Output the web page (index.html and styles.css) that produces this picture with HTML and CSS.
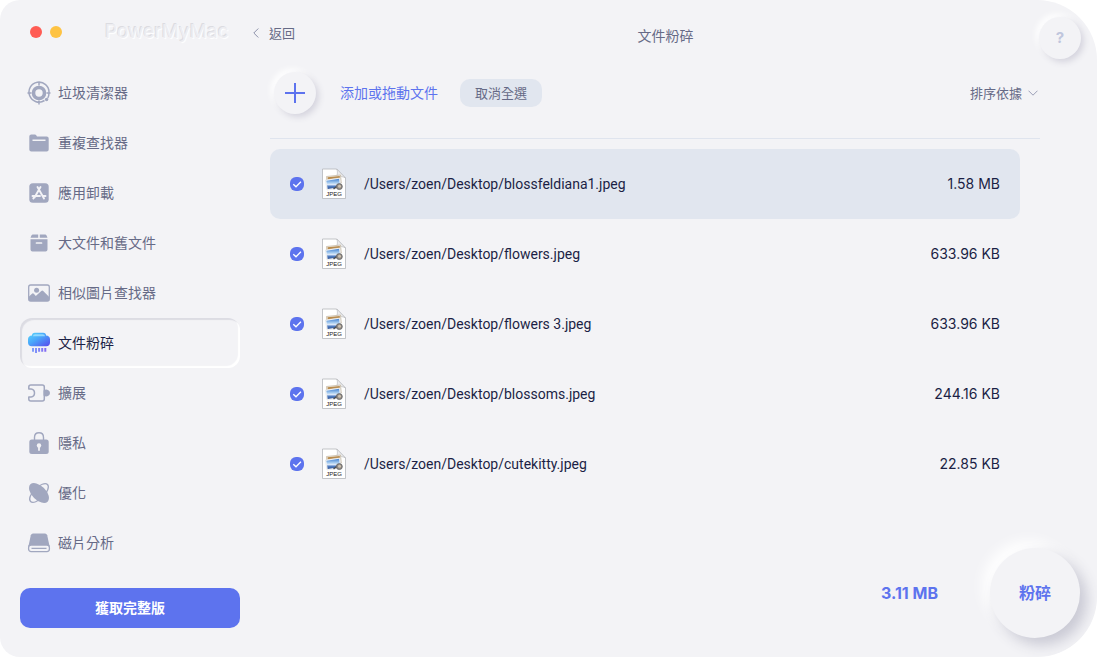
FILE: index.html
```html
<!DOCTYPE html>
<html lang="zh-Hant">
<head>
<meta charset="utf-8">
<meta name="viewport" content="width=device-width, initial-scale=1">
<title>PowerMyMac</title>
<link rel="stylesheet" href="styles.css">
</head>
<body>
<svg class="defs" aria-hidden="true">
  <defs>
    <linearGradient id="shred" x1="0" y1="0" x2="1" y2="1"><stop offset="0" stop-color="#57d8fb"/><stop offset=".45" stop-color="#4aa5fa"/><stop offset="1" stop-color="#5a48ec"/></linearGradient>
    <linearGradient id="strips" x1="0" y1="0" x2="1" y2="0"><stop offset="0" stop-color="#7fa0fb"/><stop offset="1" stop-color="#8468f2"/></linearGradient>
    <linearGradient id="photo" x1="0" y1="0" x2="0" y2="1"><stop offset="0" stop-color="#3f7fd0"/><stop offset=".4" stop-color="#a9cdf0"/><stop offset=".6" stop-color="#e6eefa"/><stop offset=".7" stop-color="#5a86c8"/><stop offset="1" stop-color="#2a4f93"/></linearGradient>
    <symbol id="jpeg" viewBox="0 0 26 32">
      <path d="M1.500 1h14.200L24.500 10v20.500h-23z" fill="#fff" stroke="#b4b6bb" stroke-width=".8"/>
      <path d="M15.700 1c1.200 2.500.8 5.500-.2 8 3-1 6.500-.6 9 1z" fill="#ececee" stroke="#b5b7bb" stroke-width=".6"/>
      <path d="M5.500 8.500l14-1.500.8 8-14.200 1.500z" fill="#f3efe8" stroke="#b9a78e" stroke-width=".6"/>
      <path d="M6.500 9.300l12.200-1.300.3 1.900-12.300 1.300z" fill="#b88b4d"/>
      <path d="M4.500 12l14.300-2.200 1.300 9.800L6 22z" fill="#fff" stroke="#ccc" stroke-width=".4"/>
      <path d="M5.300 12.700l12.800-2 1.100 8.300L6.700 21z" fill="url(#photo)"/>
      <path d="M12.500 20.800l4-2.800" stroke="#4a4d54" stroke-width="1.500"/>
      <circle cx="18.300" cy="18.600" r="3" fill="#918a82" stroke="#66666a" stroke-width=".8"/><circle cx="18.500" cy="18.200" r="1.500" fill="#cfc3b0"/>
      <text x="13" y="28" text-anchor="middle" class="jpeg-label">JPEG</text>
    </symbol>
  </defs>
</svg>
<div class="window">
  <aside class="sidebar">
    <header class="brand">
      <div class="lights"><button class="light light-close" aria-label="關閉"></button><button class="light light-min" aria-label="最小化"></button></div>
      <span class="brand-name">PowerMyMac</span>
    </header>
    <nav class="nav">
      <a class="nav-item" href="#"><svg class="icon" viewBox="0 0 24 24"><circle cx="12" cy="12" r="5.500" fill="none" stroke="currentColor" stroke-width="3.600"/><path d="M17.500 19.500A10 10 0 1 1 22 11.500M22 12q0 3-1.300 5M12 .5v4M.5 12h4M19.500 12h4M12 19.500v4" fill="none" stroke="currentColor" stroke-width="1.500"/><circle cx="19.600" cy="18.500" r="1.700" fill="currentColor"/></svg>垃圾清潔器</a>
      <a class="nav-item" href="#"><svg class="icon" viewBox="0 0 24 24"><path d="M2.300 5.500q0-2 2-2h3.500q1 0 1.600 1L10 5.500h9.700q2 0 2 2v11q0 2-2 2H4.300q-2 0-2-2z" fill="currentColor"/><path d="M5.500 9.300h13" stroke="#f3f3f6" stroke-width="1.500"/></svg>重複查找器</a>
      <a class="nav-item" href="#"><svg class="icon" viewBox="0 0 24 24"><rect x="2.300" y="2.300" width="19.400" height="19.400" rx="3.500" fill="currentColor"/><path d="M10.500 6l6.500 11.500M13.500 6L7.500 16.500M5.500 15h7.500M15.800 15h2.700M6.300 17.500l.7-1.200" stroke="#f3f3f6" stroke-width="1.900" stroke-linecap="round"/></svg>應用卸載</a>
      <a class="nav-item" href="#"><svg class="icon" viewBox="0 0 24 24"><path d="M6 3.500h5.200v3.300H3.500l.8-2q.5-1.300 1.700-1.300zM12.800 3.500H18q1.200 0 1.700 1.300l.8 2h-7.700zM3.500 8.200h17v10.300q0 2-2 2h-13q-2 0-2-2z" fill="currentColor"/><path d="M9.500 12h5" stroke="#f3f3f6" stroke-width="1.700" stroke-linecap="round"/></svg>大文件和舊文件</a>
      <a class="nav-item" href="#"><svg class="icon" viewBox="0 0 24 24"><rect x="1.700" y="4" width="20.600" height="16" rx="2" fill="none" stroke="currentColor" stroke-width="1.300"/><circle cx="9.600" cy="9.300" r="2.500" fill="currentColor"/><path d="M2 15.500l3.300-3q.8-.5 1.500.2l2 2.300 5.500-5q1-.8 1.900 0l5.800 5.700V20H2z" fill="currentColor"/></svg>相似圖片查找器</a>
      <a class="nav-item nav-active" href="#" aria-current="page"><svg class="icon" viewBox="0 0 24 24"><path d="M5 4.500q0-2.800 2.800-2.800h8.400q2.800 0 2.800 2.800 4 .3 4 4v3q0 3.700-3.800 3.700H4.800Q1 15.200 1 11.500v-3q0-3.700 4-4z" fill="url(#shred)"/><path d="M6 5.200q0-2 2.200-2h7.600q2.200 0 2.200 2z" fill="#aeeaff" opacity=".7"/><path d="M5 17h2v3.700H5zM8 17h2v5H8zM11.100 17h2v3.700h-2zM14.200 17h2v3.700h-2zM17.300 17h2v3.700h-2z" fill="url(#strips)"/></svg>文件粉碎</a>
      <a class="nav-item" href="#"><svg class="icon" viewBox="0 0 24 24"><path d="M1.800 8V6q0-2 2-2h11.500q2 0 2 2v12q0 2-2 2H3.800q-2 0-2-2v-2H4q3.500-.4 3.500-4T4 8z" fill="none" stroke="currentColor" stroke-width="1.500" stroke-linejoin="round"/><path d="M16.500 9.500q2.500-1.700 4.500-.5t2 3-2 3-4.500-.5z" fill="currentColor"/></svg>擴展</a>
      <a class="nav-item" href="#"><svg class="icon" viewBox="0 0 24 24"><path d="M7.500 9V6.500q0-4.700 4.500-4.700t4.500 4.700V9" fill="none" stroke="currentColor" stroke-width="1.400"/><rect x="2.300" y="8.500" width="19.400" height="14.500" rx="2.500" fill="currentColor"/><circle cx="12" cy="14.500" r="2.200" fill="#f3f3f6"/><path d="M12 14.500v4.500" stroke="#f3f3f6" stroke-width="1.800" stroke-linecap="round"/></svg>隱私</a>
      <a class="nav-item" href="#"><svg class="icon" viewBox="0 0 24 24"><ellipse cx="12" cy="12" rx="12" ry="5.500" transform="rotate(-45 12 12)" fill="none" stroke="currentColor" stroke-width="1.300"/><ellipse cx="12" cy="12" rx="12.200" ry="7" transform="rotate(45 12 12)" fill="currentColor"/></svg>優化</a>
      <a class="nav-item" href="#"><svg class="icon" viewBox="0 0 24 24"><path d="M6 2.500h12q1.700 0 2.200 1.700L22.500 15h-21L3.800 4.200Q4.300 2.500 6 2.500z" fill="currentColor"/><rect x="1.600" y="14" width="20.800" height="6.600" rx="2.500" fill="#f3f3f6" stroke="currentColor" stroke-width="1.300"/><path d="M4.500 17.300h15" stroke="currentColor" stroke-width="1.300"/></svg>磁片分析</a>
    </nav>
    <button class="upgrade">獲取完整版</button>
  </aside>
  <main class="main">
    <header class="topbar">
      <button class="back"><svg class="chevron-left" viewBox="0 0 6 10"><path d="M5.300.5L.8 5l4.500 4.500"/></svg>返回</button>
      <h1 class="title">文件粉碎</h1>
      <button class="round help">?</button>
    </header>
    <div class="toolbar">
      <button class="round add" aria-label="添加"><svg class="plus" viewBox="0 0 20 20"><path d="M10 0v20M0 10h20"/></svg></button>
      <span class="add-text">添加或拖動文件</span>
      <button class="deselect">取消全選</button>
      <button class="sort">排序依據<svg class="chevron-down" viewBox="0 0 10 6"><path d="M.5.7L5 5.200 9.500.7"/></svg></button>
    </div>
    <ul class="files">
      <li><label class="file file-active"><input class="check" type="checkbox" checked><svg class="thumb"><use href="#jpeg"/></svg><span class="path">/Users/zoen/Desktop/blossfeldiana1.jpeg</span><span class="size">1.58 MB</span></label></li>
      <li><label class="file"><input class="check" type="checkbox" checked><svg class="thumb"><use href="#jpeg"/></svg><span class="path">/Users/zoen/Desktop/flowers.jpeg</span><span class="size">633.96 KB</span></label></li>
      <li><label class="file"><input class="check" type="checkbox" checked><svg class="thumb"><use href="#jpeg"/></svg><span class="path">/Users/zoen/Desktop/flowers 3.jpeg</span><span class="size">633.96 KB</span></label></li>
      <li><label class="file"><input class="check" type="checkbox" checked><svg class="thumb"><use href="#jpeg"/></svg><span class="path">/Users/zoen/Desktop/blossoms.jpeg</span><span class="size">244.16 KB</span></label></li>
      <li><label class="file"><input class="check" type="checkbox" checked><svg class="thumb"><use href="#jpeg"/></svg><span class="path">/Users/zoen/Desktop/cutekitty.jpeg</span><span class="size">22.85 KB</span></label></li>
    </ul>
    <footer class="bottom">
      <span class="total">3.11 MB</span>
      <button class="shred">粉碎</button>
    </footer>
  </main>
</div>
</body>
</html>
```

FILE: styles.css
```css
* { box-sizing: border-box; }

body {
  margin: 0;
  background: #fff;
  color: #666a86;
  font: 14px/20px Inter, "Noto Sans CJK TC", sans-serif;
}

button {
  margin: 0;
  padding: 0;
  border: 0;
  background: none;
  color: inherit;
  font: inherit;
}

.defs { position: absolute; width: 0; height: 0; }

.window {
  display: flex;
  min-height: 100vh;
  overflow: hidden;
  background: #f3f3f6;
  border-radius: 20px 60px 60px 20px;
}

.sidebar {
  display: flex;
  flex-direction: column;
  flex: 0 0 240px;
  padding-left: 20px;
}

.brand {
  display: flex;
  align-items: center;
  gap: 43px;
  height: 68px;
  padding: 0 0 4px 10px;
}

.lights { display: flex; gap: 8px; }
.light { width: 12px; height: 12px; border-radius: 50%; }
.light-close { background: #ff5c54; }
.light-min { background: #fec343; }

.brand-name {
  color: #ededf1;
  font: 19px/24px Inter, sans-serif;
  text-shadow: 1px 1px 1px #fff, -1px -1px 0 #dcdce1;
}

.nav { display: flex; flex-direction: column; }

.nav-item {
  display: flex;
  align-items: center;
  gap: 7px;
  height: 50px;
  padding-left: 7px;
  border-radius: 12px;
  color: #666a86;
  text-decoration: none;
}

.icon { flex: none; width: 24px; height: 24px; color: #a1a7bf; }

.nav-active {
  color: #1b1f45;
  box-shadow: inset 2px 2px 1px #dcdce3, inset -2px -2px 1px #fff;
}

.upgrade {
  height: 40px;
  margin-top: 20px;
  border-radius: 10px;
  background: #5d73ee;
  color: #fff;
  font-weight: 700;
}

.main {
  display: flex;
  flex-direction: column;
  flex: 1;
  min-width: 0;
  padding: 0 16px 19px 10px;
}

.topbar {
  display: grid;
  grid-template-columns: 1fr auto 1fr;
  align-items: center;
  height: 72px;
}

.back {
  display: flex;
  align-items: center;
  justify-self: start;
  gap: 10px;
  padding: 0 0 6px 3px;
  font-size: 13px;
}

.chevron-left { width: 6px; height: 10px; fill: none; stroke: #8d91ab; }
.chevron-down { width: 10px; height: 6px; fill: none; stroke: #9a9eb6; }

.title { margin: 0; font-size: 14px; font-weight: 400; }

.round {
  width: 42px;
  height: 42px;
  border-radius: 50%;
  background: #f3f3f6;
  box-shadow: 3px 3px 6px #d5d4de, -3px -3px 6px #fff;
}

.help {
  justify-self: end;
  margin-top: 4px;
  color: #bfc6dd;
  font-size: 15px;
  font-weight: 700;
}

.toolbar {
  display: flex;
  align-items: center;
  height: 67px;
  margin: 0 41px 0 20px;
  padding: 0 2px 25px 4px;
  border-bottom: 1px solid #dfe4ee;
}

.add { display: grid; place-items: center; }
.plus { width: 20px; height: 20px; stroke: #5d73ee; stroke-width: 2; }
.add-text { margin: 0 22px 0 24px; color: #5d73ee; }

.deselect {
  height: 28px;
  padding: 0 15px;
  border-radius: 10px;
  background: #e1e6ef;
  font-size: 13px;
}

.sort {
  display: flex;
  align-items: center;
  gap: 6px;
  margin-left: auto;
  font-size: 13px;
}

.files { margin: 10px 61px 0 20px; padding: 0; list-style: none; }

.file {
  display: flex;
  align-items: center;
  height: 70px;
  padding: 0 20px;
  border-radius: 10px;
  color: #1b1f45;
}

.file-active { background: #e1e6ef; }

.check {
  flex: none;
  appearance: none;
  width: 14px;
  height: 14px;
  margin: 0 17px 0 0;
  border-radius: 6px;
  background: #5d73ee url("data:image/svg+xml,%3Csvg xmlns='http://www.w3.org/2000/svg' viewBox='0 0 14 14'%3E%3Cpath d='M3.300 7.200l2.700 2.600 4.900-5' fill='none' stroke='white' stroke-width='1.300'/%3E%3C/svg%3E");
}

.thumb { flex: none; width: 26px; height: 32px; margin-right: 17px; }
.jpeg-label { fill: #222; font: 6px "Liberation Sans", sans-serif; }
.path { flex: 1; font-family: Roboto, sans-serif; }

.bottom {
  display: flex;
  align-items: center;
  justify-content: flex-end;
  gap: 52px;
  margin: auto 1px 0 0;
}

.total { color: #5d73ee; font-size: 16px; font-weight: 700; }

.shred {
  width: 90px;
  height: 90px;
  border-radius: 50%;
  background: #f3f3f6;
  box-shadow: 7px 7px 14px #c9c9d4, -7px -7px 14px #fff;
  color: #5d73ee;
  font-size: 16px;
  font-weight: 700;
}
```
